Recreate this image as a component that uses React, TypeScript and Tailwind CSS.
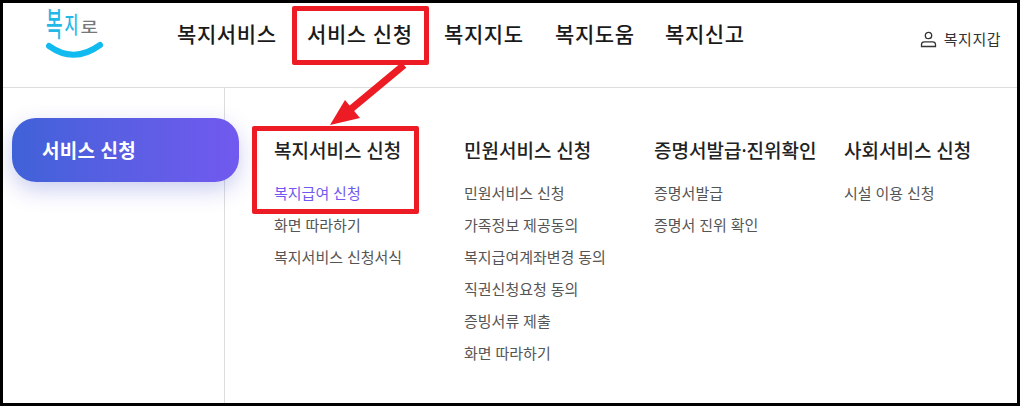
const font = { fontFamily: '"Noto Sans", "Noto Sans CJK KR", sans-serif' };

const navItems = [
  { label: "복지서비스", cls: "w-[99px]" },
  { label: "서비스 신청", cls: "w-[106px] ml-[31px]" },
  { label: "복지지도", cls: "w-[80px] ml-[31px]" },
  { label: "복지도움", cls: "w-[80px] ml-[31px]" },
  { label: "복지신고", cls: "w-[80px] ml-[30px]" },
];

const columns = [
  {
    title: "복지서비스 신청",
    items: ["복지급여 신청", "화면 따라하기", "복지서비스 신청서식"],
  },
  {
    title: "민원서비스 신청",
    items: ["민원서비스 신청", "가족정보 제공동의", "복지급여계좌변경 동의", "직권신청요청 동의", "증빙서류 제출", "화면 따라하기"],
  },
  {
    title: "증명서발급·진위확인",
    items: ["증명서발급", "증명서 진위 확인"],
  },
  {
    title: "사회서비스 신청",
    items: ["시설 이용 신청"],
  },
];

function Logo() {
  return (
    <div className="relative w-[60px] h-[54px] ml-[43px]">
      <div className="flex items-start text-[#22b8e8] leading-none font-medium">
        <span className="text-[18px] scale-y-[1.8] origin-top mt-[3px]">복</span>
        <span className="text-[15px] scale-y-[1.5] origin-top ml-[2px] mt-[9px]">지</span>
        <span className="text-[19px] scale-y-[0.85] origin-top ml-[2px] mt-[15px] text-[#77787c]">로</span>
      </div>
      <svg className="absolute left-0 top-[36px]" width="60" height="24" viewBox="0 0 60 24" fill="none">
        <path d="M3 6 Q28 24 54 5" stroke="#12bbef" strokeWidth="6" strokeLinecap="round" />
      </svg>
    </div>
  );
}

export default function App() {
  return (
    <div style={font} className="relative w-[1020px] h-[406px] bg-white border-[3px] border-black overflow-hidden flex flex-col">
      <header className="h-[85px] shrink-0 flex border-b border-[#dddddd]">
        <div className="w-[174px] shrink-0 pt-[1px]">
          <Logo />
        </div>
        <nav className="flex h-[62px] items-center pt-[1px] text-[21px] font-medium text-[#1a1a1a] tracking-[0.6px]">
          {navItems.map((n) => (
            <span key={n.label} className={`whitespace-nowrap ${n.cls}`}>
              {n.label}
            </span>
          ))}
        </nav>
        <div className="ml-auto mr-[16px] mt-[26px] h-[20px] flex items-center gap-[7px] text-[15px] text-[#333333] tracking-[0.5px]">
          <svg width="17" height="17" viewBox="0 0 17 17" fill="none" stroke="#333333" strokeWidth="1.3">
            <circle cx="8.5" cy="4.5" r="3.2" />
            <path d="M1.5 15.5 V13.5 Q1.5 10.8 4.5 10.8 H12.5 Q15.5 10.8 15.5 13.5 V15.5 Z" />
          </svg>
          <span>복지지갑</span>
        </div>
      </header>
      <div className="flex-1 flex min-h-0">
        <aside className="w-[222px] shrink-0 border-r border-[#dddddd] relative">
          <div className="absolute left-[9px] top-[30px] w-[227px] h-[64px] rounded-[24px] bg-gradient-to-r from-[#3f62d8] to-[#7159ef] shadow-[0_8px_22px_rgba(70,80,200,0.28)] flex items-center pl-[30px] text-white text-[19px] font-semibold tracking-[0.3px] pt-[2px]">
            서비스 신청
          </div>
        </aside>
        <main className="flex pl-[49px] pt-[49px]">
          {columns.map((c) => (
            <div key={c.title} className="w-[190px] shrink-0">
              <h3 className="text-[19px] font-medium text-[#222222] leading-[28px] whitespace-nowrap">
                {c.title}
              </h3>
              <ul className="mt-[12px] text-[15px] text-[#555555]">
                {c.items.map((it) => (
                  <li
                    key={it}
                    className={`h-[32px] leading-[32px] whitespace-nowrap ${it === "복지급여 신청" ? "text-[#7159ef]" : ""}`}
                  >
                    {it}
                  </li>
                ))}
              </ul>
            </div>
          ))}
        </main>
      </div>

      {/* red annotation boxes + arrow */}
      <div className="absolute left-[289px] top-[3px] w-[137px] h-[59px] border-[5px] border-[#ed1c24] rounded-[2px]" />
      <div className="absolute left-[249px] top-[123px] w-[167px] h-[88px] border-[5px] border-[#ed1c24] rounded-[2px]" />
      <svg className="absolute left-[320px] top-[58px]" width="100" height="70" viewBox="0 0 100 70" fill="none">
        <path d="M81 4 L28 48" stroke="#ed1c24" strokeWidth="7" />
        <path d="M7 64 L22 39 L37 57 Z" fill="#ed1c24" />
      </svg>
    </div>
  );
}
